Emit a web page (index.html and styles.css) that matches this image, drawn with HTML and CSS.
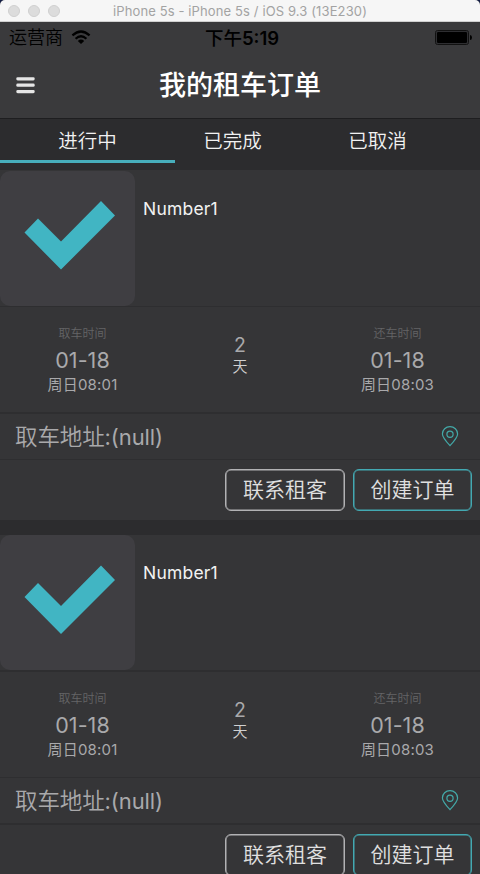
FILE: index.html
```html
<!DOCTYPE html>
<html lang="zh-CN">
<head>
<meta charset="utf-8">
<title>我的租车订单</title>
<link rel="stylesheet" href="styles.css">
</head>
<body>
<div class="window">
  <div class="titlebar">
    <div class="lights"><i></i><i></i><i></i></div>
    <span class="window-title">iPhone 5s - iPhone 5s / iOS 9.3 (13E230)</span>
  </div>
  <header class="header">
    <div class="status">
      <div class="carrier"><span>运营商</span>
        <svg class="wifi" width="20" height="15" viewBox="0 0 20 15"><g fill="none" stroke="#000" stroke-width="2.2"><path d="M1.4 5.4Q10-2.4 18.6 5.4"/><path d="M4.6 8.7Q10 3.8 15.4 8.7"/></g><path d="M10 14L6.8 10.9Q10 8.2 13.2 10.9Z"/></svg>
      </div>
      <span class="clock"><span>下午</span>5:19</span>
      <svg class="battery" width="37" height="16" viewBox="0 0 37 16"><rect x=".5" y=".5" width="33" height="14" rx="2" fill="none" stroke="#111"/><rect x="1.5" y="1.5" width="31" height="12" rx="1" fill="none" stroke="#2a2a2c" stroke-width=".7"/><rect x="2" y="2" width="30" height="11" rx="1"/><path d="M35 5Q37 5 37 7.5T35 10Z"/></svg>
    </div>
    <div class="nav">
      <svg class="menu" width="19" height="17" viewBox="0 0 19 17" fill="#e6e6e6"><rect x=".3" y=".2" width="18.4" height="3.2" rx="1.4"/><rect x=".3" y="6.6" width="18.4" height="3.2" rx="1.4"/><rect x=".3" y="13" width="18.4" height="3.2" rx="1.4"/></svg>
      <h1>我的租车订单</h1>
    </div>
  </header>
  <nav class="tabs">
    <span class="tab active">进行中</span><span class="tab">已完成</span><span class="tab">已取消</span>
  </nav>

  <article class="card card-first">
    <div class="summary">
      <div class="photo"><svg width="135" height="135" viewBox="0 0 135 135"><path d="M24.5 61.5L38 47.5L61 70.5L101 30L115 44.5L61 98.5Z" fill="#41b5c3"/></svg></div>
      <span class="name">Number1</span>
    </div>
    <div class="times">
      <div class="time"><small>取车时间</small><b>01-18</b><span>周日08:01</span></div>
      <div class="days"><b>2</b><span>天</span></div>
      <div class="time"><small>还车时间</small><b>01-18</b><span>周日08:03</span></div>
    </div>
    <div class="address"><span><em>取车地址</em>:(null)</span>
      <svg width="18" height="21" viewBox="0 0 18 21" fill="none" stroke="#43a9a8" stroke-width="1.2"><path d="M9 19.7Q1.4 11.5 1.4 8A7.6 7.4 0 0 1 16.6 8Q16.6 11.5 9 19.7Z"/><circle cx="9" cy="8.2" r="3.1"/></svg>
    </div>
    <div class="actions"><button>联系租客</button><button class="primary">创建订单</button></div>
  </article>

  <article class="card card-second">
    <div class="summary">
      <div class="photo"><svg width="135" height="135" viewBox="0 0 135 135"><path d="M24.5 62L38 48L61 71L101 30.5L115 45L61 99Z" fill="#41b5c3"/></svg></div>
      <span class="name">Number1</span>
    </div>
    <div class="times">
      <div class="time"><small>取车时间</small><b>01-18</b><span>周日08:01</span></div>
      <div class="days"><b>2</b><span>天</span></div>
      <div class="time"><small>还车时间</small><b>01-18</b><span>周日08:03</span></div>
    </div>
    <div class="address"><span><em>取车地址</em>:(null)</span>
      <svg width="18" height="21" viewBox="0 0 18 21" fill="none" stroke="#43a9a8" stroke-width="1.2"><path d="M9 19.7Q1.4 11.5 1.4 8A7.6 7.4 0 0 1 16.6 8Q16.6 11.5 9 19.7Z"/><circle cx="9" cy="8.2" r="3.1"/></svg>
    </div>
    <div class="actions"><button>联系租客</button><button class="primary">创建订单</button></div>
  </article>
</div>
</body>
</html>
```
FILE: styles.css
```css
* { box-sizing: border-box; }
html, body { margin: 0; height: 874px; overflow: hidden; background: #141e46; }
body { font-family: Inter, "Noto Sans CJK SC", sans-serif; color: #fff; }
.window { width: 480px; height: 874px; overflow: hidden; background: #2c2c2e; border-radius: 5px 5px 0 0; white-space: nowrap; }
.titlebar { height: 22px; background: #f6f6f6; border-bottom: 1px solid #d0d0d0; display: grid; grid-template-columns: 60px 1fr 60px; align-items: center; }
.lights { display: flex; gap: 8px; padding-left: 8px; }
.lights i { width: 12px; height: 12px; flex: none; border-radius: 50%; background: #dcdcdc; border: 1px solid #cfcfcf; }
.window-title { font-size: 13px; line-height: 20px; letter-spacing: .12px; color: #a3a3a3; text-align: center; }
.header { height: 97px; background: #3a3a3c; border-bottom: 1px solid #1e1e20; }
.status { height: 31px; padding: 0 8px 0 9px; display: grid; grid-template-columns: 1fr auto 1fr; align-items: center; color: #000; }
.carrier { display: flex; align-items: center; gap: 8px; font-size: 18px; line-height: 30px; font-weight: 350; }
.clock { padding-left: 3px; font-size: 18.5px; line-height: 30px; font-weight: 600; }
.clock span { font-size: 18.5px; font-weight: 500; }
.battery { justify-self: end; }
.nav { height: 65px; padding: 0 16px; display: grid; grid-template-columns: 19px 1fr 19px; align-items: center; }
h1 { margin: 0; font-size: 27px; line-height: 40px; font-weight: 500; text-align: center; }
.tabs { height: 51px; padding-left: 15px; display: flex; }
.tab { width: 145px; height: 44px; padding-top: 7px; font-size: 19.5px; line-height: 30px; font-weight: 350; text-align: center; color: #f2f2f2; }
.active { width: 175px; margin: 0 -15px; border-bottom: 3px solid #47aebb; }
.card { background: #353537; margin-bottom: 15px; }
.card-first { --l1: 1px; --l2: 2px; --l3: 1px; }
.card-second { --l1: 2px; --l2: 1px; --l3: 2px; }
.summary { height: 137px; display: flex; gap: 8px; border-bottom: var(--l1) solid #2e2e30; }
.card-first .summary { padding-top: 1px; }
.photo { width: 135px; height: 135px; border-radius: 10px; background: #3f3e42; }
.photo svg { display: block; }
.name { padding-top: 26px; font-size: 17.5px; line-height: 24px; letter-spacing: .2px; color: #f2f2f2; }
.times { height: calc(105px + var(--l2)); display: grid; grid-template-columns: 165px 150px 165px; border-bottom: var(--l2) solid #2e2e30; color: #a9a9ab; }
.time, .days { display: flex; flex-direction: column; align-items: center; }
.time { padding-top: 17px; }
.time small { font-size: 12px; line-height: 20px; font-weight: 350; color: #646466; }
.time b { font-size: 21.5px; line-height: 32px; font-weight: 400; letter-spacing: .1px; }
.time span { font-size: 15px; line-height: 18px; letter-spacing: .2px; }
.days { padding-top: 26px; }
.days b { font-size: 19.5px; line-height: 24px; font-weight: 400; }
.days span { font-size: 15px; line-height: 20px; font-weight: 350; color: #d0d0d0; }
.address { height: calc(45px + var(--l3)); padding: 0 21.5px 0 15px; display: flex; align-items: center; justify-content: space-between; border-bottom: var(--l3) solid #2e2e30; font-size: 22px; letter-spacing: -.1px; color: #a9a9ab; }
.address span { padding-bottom: 4px; }
.address em { font-size: 22.5px; font-style: normal; font-weight: 350; }
.actions { height: 60px; padding: 9px 8px; display: flex; justify-content: flex-end; gap: 8px; }
button { width: 120px; height: 42px; padding: 0; border: 1px solid #b2b2b4; box-shadow: inset 0 0 0 .5px #b2b2b4; border-radius: 6px; background: none; color: #e0e0e0; font: 350 21px/40px Inter, "Noto Sans CJK SC", sans-serif; }
.primary { width: 119px; border-color: #43a9b2; box-shadow: inset 0 0 0 .5px #43a9b2; }
```
